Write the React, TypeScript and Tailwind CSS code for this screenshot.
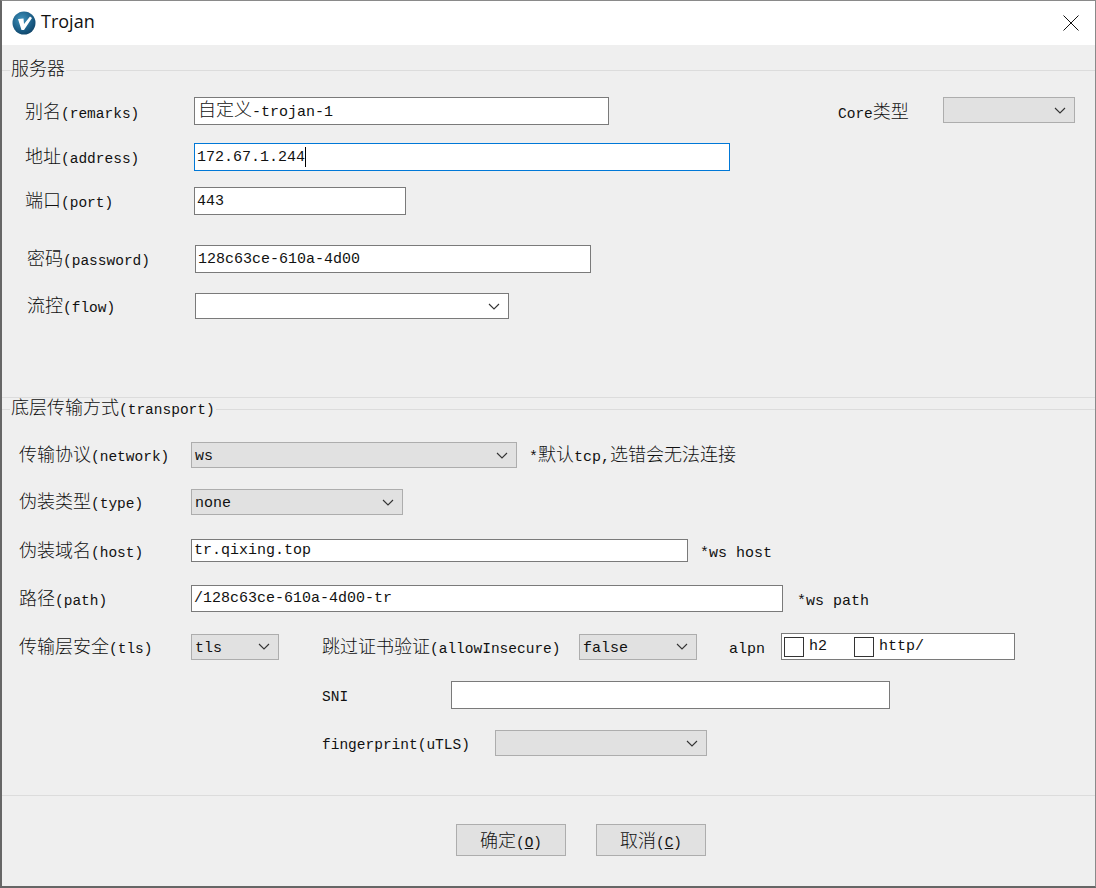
import { ReactNode } from "react";

// simsun-ish: cjk is a touch wider than two mono cells, so split runs by script
const Txt = ({ t, cjk = "text-[18px]", latin = "text-[14.5px]" }: { t: string; cjk?: string; latin?: string }) => {
    const parts = t.match(/[\u3000-\u9fff]+|[^\u3000-\u9fff]+/g) ?? [];
    return (
        <span className="whitespace-pre leading-none text-[#111]">
            {parts.map((p, i) =>
                /[\u3000-\u9fff]/.test(p) ? (
                    <span key={i} className={`font-['Noto_Sans_CJK_SC',sans-serif] font-light ${cjk}`}>{p}</span>
                ) : (
                    <span key={i} className={`font-['Liberation_Mono',monospace] ${latin}`}>{p}</span>
                )
            )}
        </span>
    );
};

const Chevron = () => (
    <svg width="12" height="7" viewBox="0 0 12 7" fill="none" className="shrink-0">
        <path d="M1 1l5 5 5-5" stroke="#333" strokeWidth="1.1" />
    </svg>
);

const Select = ({ w, value, white }: { w: string; value?: string; white?: boolean }) => (
    <div className={`${w} flex h-[26px] shrink-0 items-center justify-between border pl-[3px] pr-[8px] ${white ? "border-[#7a7a7a] bg-white" : "border-[#adadad] bg-[#e1e1e1]"}`}>
        <span className="pt-[3px] font-['Liberation_Mono',monospace] text-[15px] leading-none text-[#111]">{value}</span>
        <Chevron />
    </div>
);

const Input = ({ w, h = "h-[28px]", focus, children }: { w: string; h?: string; focus?: boolean; children?: ReactNode }) => (
    <div className={`${w} ${h} flex shrink-0 items-center border bg-white pb-[3px] pl-[2px] ${focus ? "border-[#0078d7]" : "border-[#7a7a7a]"}`}>
        {children}
    </div>
);

const Legend = ({ t }: { t: string }) => (
    <div className="flex h-[20px] items-center">
        <div className="h-px w-[8px] bg-[#dcdcdc]" />
        <div className="-translate-y-[1px] px-px"><Txt t={t} /></div>
        <div className="h-px flex-1 bg-[#dcdcdc]" />
    </div>
);

const Mono = ({ t }: { t: string }) => (
    <Txt t={t} cjk="text-[18px]" latin="text-[15px]" />
);

const Check = () => <div className="h-[20px] w-[20px] shrink-0 border border-[#333] bg-white" />;

const Btn = ({ t, k }: { t: string; k: string }) => (
    <button className="h-[32px] w-[110px] border border-[#adadad] bg-[#e1e1e1]">
        <span className="font-['Noto_Sans_CJK_SC',sans-serif] text-[18px] font-light text-[#111]">{t}</span>
        <span className="font-['Liberation_Mono',monospace] text-[14.4px] text-[#111]">(<u>{k}</u>)</span>
    </button>
);

export default function App() {
    return (
        <div className="flex h-[888px] w-[1096px] flex-col overflow-hidden border-b-2 border-l-2 border-t border-r border-[#666] border-t-[#8a8a8a] border-r-[#8a8a8a] bg-[#efefef]">
            {/* title bar */}
            <div className="flex h-[44px] shrink-0 items-center justify-between bg-white pl-[10px] pr-[16px]">
                <div className="flex items-center gap-[5px]">
                    <svg width="24" height="24" viewBox="0 0 24 24">
                        <defs>
                            <radialGradient id="logo" cx="0.4" cy="0.35" r="0.75">
                                <stop offset="0" stopColor="#3f93bd" />
                                <stop offset="0.7" stopColor="#17577f" />
                                <stop offset="1" stopColor="#0f3f60" />
                            </radialGradient>
                        </defs>
                        <circle cx="12" cy="12" r="11.5" fill="url(#logo)" />
                        <path d="M6 8l5.5-.5.5 5.5 6-7.5 2 1.5-8 12h-2.5z" fill="#fff" />
                    </svg>
                    <span className="-translate-y-[2px] font-['Open_Sans',sans-serif] text-[18px] text-[#111]">Trojan</span>
                </div>
                <svg width="16" height="16" viewBox="0 0 16 16">
                    <path d="M.5.5l15 15M15.5.5l-15 15" stroke="#111" strokeWidth="1" />
                </svg>
            </div>

            {/* server */}
            <div className="mt-[15px]"><Legend t="服务器" /></div>
            <div className="mt-[17px] flex h-[28px] items-start pl-[23px]">
                <div className="flex h-[28px] w-[169px] items-center"><Txt t="别名(remarks)" /></div>
                <Input w="w-[415px]"><div className="pl-px"><Mono t="自定义-trojan-1" /></div></Input>
                <div className="ml-[229px] flex h-[28px] w-[105px] items-center"><Txt t="Core类型" /></div>
                <Select w="w-[132px]" />
            </div>
            <div className="mt-[18px] flex h-[28px] items-center pl-[23px]">
                <div className="w-[169px]"><Txt t="地址(address)" /></div>
                <Input w="w-[536px]" focus>
                    <Mono t="172.67.1.244" />
                    <div className="mt-[3px] h-[20px] w-px bg-black" />
                </Input>
            </div>
            <div className="mt-[16px] flex h-[28px] items-center pl-[23px]">
                <div className="w-[169px]"><Txt t="端口(port)" /></div>
                <Input w="w-[212px]"><Mono t="443" /></Input>
            </div>
            <div className="mt-[30px] flex h-[28px] items-center pl-[25px]">
                <div className="w-[168px]"><Txt t="密码(password)" /></div>
                <Input w="w-[396px]"><Mono t="128c63ce-610a-4d00" /></Input>
            </div>
            <div className="mt-[20px] flex h-[26px] items-center pl-[25px]">
                <div className="w-[168px]"><Txt t="流控(flow)" /></div>
                <Select w="w-[314px]" white />
            </div>

            <div className="mt-[78px] h-px bg-[#dcdcdc]" />

            {/* transport */}
            <div className="mt-[1px]"><Legend t="底层传输方式(transport)" /></div>
            <div className="mt-[23px] flex h-[26px] items-center pl-[17px]">
                <div className="w-[172px]"><Txt t="传输协议(network)" /></div>
                <Select w="w-[326px]" value="ws" />
                <div className="ml-[12px]"><Mono t="*默认tcp,选错会无法连接" /></div>
            </div>
            <div className="mt-[21px] flex h-[26px] items-center pl-[17px]">
                <div className="w-[172px]"><Txt t="伪装类型(type)" /></div>
                <Select w="w-[212px]" value="none" />
            </div>
            <div className="mt-[24px] flex h-[23px] items-center pl-[17px]">
                <div className="w-[172px]"><Txt t="伪装域名(host)" /></div>
                <Input w="w-[497px]" h="h-[23px]"><Mono t="tr.qixing.top" /></Input>
                <div className="ml-[12px]"><Mono t="*ws host" /></div>
            </div>
            <div className="mt-[23px] flex h-[27px] items-center pl-[17px]">
                <div className="w-[172px]"><Txt t="路径(path)" /></div>
                <Input w="w-[592px]" h="h-[27px]"><Mono t="/128c63ce-610a-4d00-tr" /></Input>
                <div className="ml-[14px]"><Mono t="*ws path" /></div>
            </div>
            <div className="mt-[21px] flex h-[27px] items-center pl-[17px]">
                <div className="w-[172px]"><Txt t="传输层安全(tls)" /></div>
                <Select w="w-[88px]" value="tls" />
                <div className="ml-[43px] w-[257px]"><Txt t="跳过证书验证(allowInsecure)" /></div>
                <Select w="w-[118px]" value="false" />
                <div className="ml-[32px] w-[52px]"><Mono t="alpn" /></div>
                <div className="flex h-[27px] w-[234px] items-center border border-[#7a7a7a] bg-white pl-[2px]">
                    <Check />
                    <div className="ml-[5px] w-[45px] -translate-y-[3px]"><Mono t="h2" /></div>
                    <Check />
                    <div className="ml-[5px] -translate-y-[3px]"><Mono t="http/" /></div>
                </div>
            </div>
            <div className="mt-[21px] flex h-[28px] items-center pl-[320px]">
                <div className="w-[129px]"><Txt t="SNI" /></div>
                <Input w="w-[439px]" />
            </div>
            <div className="mt-[21px] flex h-[26px] items-center pl-[320px]">
                <div className="w-[173px]"><Txt t="fingerprint(uTLS)" /></div>
                <Select w="w-[212px]" />
            </div>

            <div className="mt-[39px] h-px bg-[#dcdcdc]" />

            {/* buttons */}
            <div className="mt-[28px] flex gap-[30px] pl-[454px]">
                <Btn t="确定" k="O" />
                <Btn t="取消" k="C" />
            </div>
        </div>
    );
}
